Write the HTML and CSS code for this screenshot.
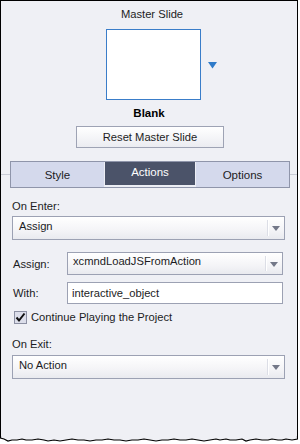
FILE: index.html
```html
<!DOCTYPE html>
<html lang="en">
<head>
    <meta charset="UTF-8">
    <title>Slide Properties</title>
    <link rel="stylesheet" href="styles.css">
</head>
<body>
    <div class="panel">
        <section class="master">
            <div class="master-title">Master Slide</div>
            <div class="thumb-row">
                <div class="thumb"></div>
                <svg class="thumb-arrow" width="9" height="7" viewBox="0 0 9 7">
                    <path d="M0 0H9L4.5 6.5Z" fill="#2f7bc9"/>
                </svg>
            </div>
            <div class="master-name">Blank</div>
            <button class="btn-reset">Reset Master Slide</button>
        </section>

        <div class="tabbar">
            <div class="tabs">
                <div class="tab">Style</div>
                <div class="tab tab-active">Actions</div>
                <div class="tab">Options</div>
            </div>
        </div>

        <section class="actions">
            <div class="label label-enter">On Enter:</div>
            <div class="select select-wide">
                <span>Assign</span>
                <i class="caret"></i>
            </div>

            <div class="field-row row-assign">
                <span class="field-label">Assign:</span>
                <div class="select select-field">
                    <span>xcmndLoadJSFromAction</span>
                    <i class="caret"></i>
                </div>
            </div>
            <div class="field-row row-with">
                <span class="field-label">With:</span>
                <div class="input">interactive_object</div>
            </div>

            <div class="check">
                <span class="check-box">
                    <svg width="11" height="11" viewBox="0 0 11 11">
                        <path d="M1.5 5.5L4 8.5L9.5 1.5" fill="none" stroke="#111" stroke-width="2"/>
                    </svg>
                </span>
                <span>Continue Playing the Project</span>
            </div>

            <div class="label label-exit">On Exit:</div>
            <div class="select select-wide select-exit">
                <span>No Action</span>
                <i class="caret"></i>
            </div>
        </section>
    </div>
    <!-- torn bottom edge of the screenshot -->
    <svg class="tear" width="298" height="8" viewBox="0 0 298 8">
        <path d="M0 0V2L4 3L8 5L12 4L17 4L22 3L26 4L32 4L38 3L44 4L48 5L54 4L60 5L66 4L72 3L78 4L84 4L90 5L96 4L102 4L108 3L114 4L120 4L126 5L132 4L138 4L144 3L150 4L156 5L162 4L168 4L174 3L180 4L186 4L192 3L198 4L204 5L210 4L216 3L220 4L226 3L230 4L236 4L242 3L246 5L250 4L256 3L262 4L268 4L272 3L278 4L282 4L286 3L292 4L297 3V0Z" fill="#eff0f5"/>
        <path d="M0.5 0V2L4 3L8 5L12 4L17 4L22 3L26 4L32 4L38 3L44 4L48 5L54 4L60 5L66 4L72 3L78 4L84 4L90 5L96 4L102 4L108 3L114 4L120 4L126 5L132 4L138 4L144 3L150 4L156 5L162 4L168 4L174 3L180 4L186 4L192 3L198 4L204 5L210 4L216 3L220 4L226 3L230 4L236 4L242 3L246 5L250 4L256 3L262 4L268 4L272 3L278 4L282 4L286 3L292 4L297.5 3V0" fill="none" stroke="#000" stroke-width="1.2"/>
    </svg>
</body>
</html>
```

FILE: styles.css
```css
body {
    margin: 0;
    background: #fff;
    font-family: "Liberation Sans", Arial, sans-serif;
    font-size: 11.2px;
    color: #1c1c24;
}

.panel {
    width: 298px;
    height: 436px;
    box-sizing: border-box;
    border: 1px solid #000;
    border-bottom: none;
    background: #eff0f5;
    display: flex;
    flex-direction: column;
}

.tear {
    display: block;
}

/* master slide block */
.master {
    display: flex;
    flex-direction: column;
    align-items: center;
}

.master-title {
    margin-top: 5px;
    line-height: 16px;
    padding-left: 6px;
}

.thumb-row {
    margin-top: 7px;
    display: flex;
    align-items: center;
    align-self: flex-start;
    padding-left: 105px;
}

.thumb {
    width: 95px;
    height: 71px;
    box-sizing: border-box;
    border: 1px solid #3a7dc9;
    background: #fff;
}

.thumb-arrow {
    margin-left: 7px;
    margin-top: 2px;
}

.master-name {
    margin-top: 5px;
    line-height: 16px;
    font-weight: bold;
    font-size: 11.5px;
    color: #000;
}

.btn-reset {
    margin-top: 5px;
    margin-left: 2px;
    width: 148px;
    height: 22px;
    border: 1px solid #9ea3b4;
    background: linear-gradient(#ffffff, #ebecf1);
    font-family: inherit;
    font-size: 11.2px;
    color: #1c1c24;
    padding: 0;
}

/* tab strip */
.tabbar {
    margin-top: 13px;
    background: linear-gradient(transparent 13px, #c9ccd6 13px, #c9ccd6 14px, transparent 14px);
}

.tabs {
    margin: 0 7px 0 9px;
    height: 27px;
    box-sizing: border-box;
    border: 1px solid #8f95aa;
    background: #d4d9ec;
    display: grid;
    grid-template-columns: 93px 92px 1fr;
}

.tab {
    display: flex;
    align-items: center;
    justify-content: center;
    font-size: 11.5px;
    padding-top: 1px;
}

.tab-active {
    background: #4b5369;
    color: #fff;
    border: 1px solid #eceef5;
    border-top: none;
    border-bottom-width: 2px;
    padding-top: 0;
    padding-bottom: 4px;
}

/* actions form */
.actions {
    padding: 0 12px 0 11px;
    display: flex;
    flex-direction: column;
}

.label {
    line-height: 16px;
}

.label-enter {
    margin-top: 10px;
}

.label-exit {
    margin-top: 12px;
}

.select {
    box-sizing: border-box;
    border: 1px solid #9ca1b3;
    background: linear-gradient(#ffffff, #f4f4f7 60%, #e9eaef);
    line-height: 18px;
    padding-left: 6px;
    display: flex;
}

.select-wide {
    height: 24px;
    margin-top: 2px;
}

.select-exit {
    margin-top: 3px;
}

.caret {
    margin: 3px 0 3px auto;
    width: 16px;
    border-left: 1px solid #dcdee6;
    box-shadow: inset 1px 0 0 #fff;
    display: flex;
    justify-content: center;
    align-items: center;
}

.caret::after {
    content: "";
    border-left: 4px solid transparent;
    border-right: 4px solid transparent;
    border-top: 5px solid #737888;
    margin-top: 1px;
}

.field-row {
    display: flex;
    align-items: center;
    margin-right: 2px;
}

.row-assign {
    margin-top: 12px;
}

.row-with {
    margin-top: 7px;
}

.field-label {
    width: 55px;
    padding-left: 1px;
    box-sizing: border-box;
}

.select-field {
    flex: 1;
    height: 23px;
    padding-left: 5px;
    line-height: 17px;
}

.input {
    flex: 1;
    height: 22px;
    box-sizing: border-box;
    border: 1px solid #9ca1b3;
    background: #fff;
    padding-left: 4px;
    line-height: 20px;
}

.check {
    margin-top: 7px;
    margin-left: 2px;
    display: flex;
    align-items: center;
    line-height: 13px;
}

.check-box {
    width: 13px;
    height: 13px;
    box-sizing: border-box;
    border: 1px solid #8c90a3;
    background: #dcdeea;
    margin-right: 4px;
    display: flex;
}
```
